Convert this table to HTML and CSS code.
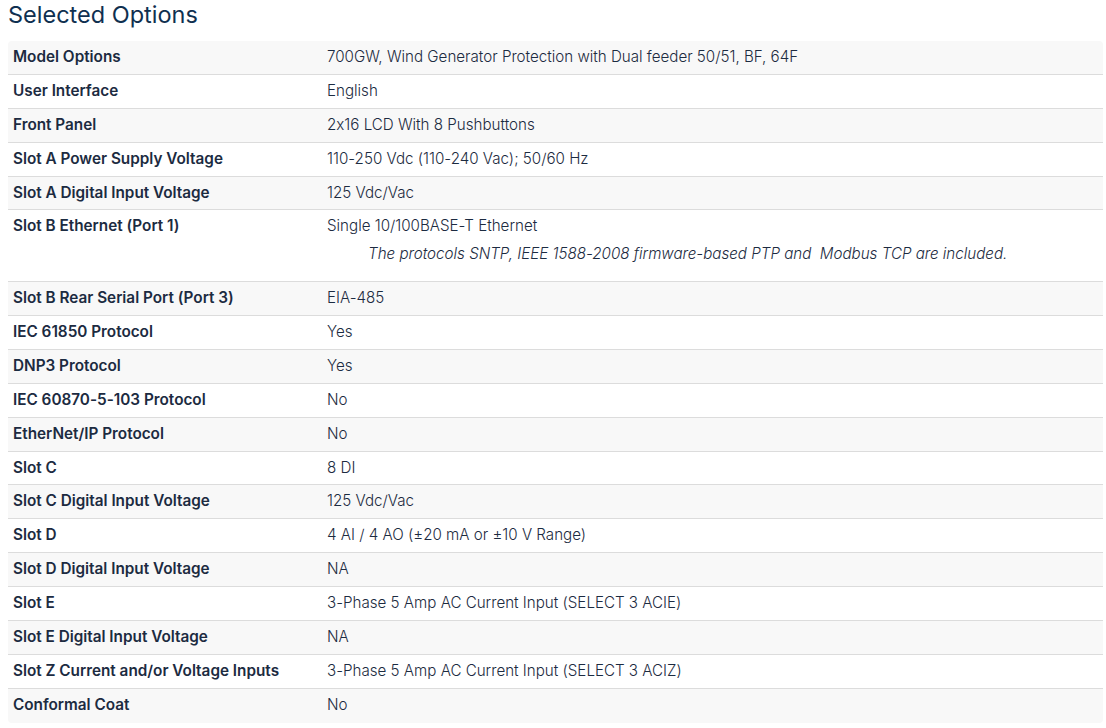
FILE: index.html
```html
<!DOCTYPE html>
<html lang="en">
<head>
<meta charset="utf-8">
<title>Selected Options</title>
<link rel="stylesheet" href="styles.css">
</head>
<body>
<h2 class="title">Selected Options</h2>
<table class="options">
<tbody>
<tr><th>Model Options</th><td>700GW, Wind Generator Protection with Dual feeder 50/51, BF, 64F</td></tr>
<tr><th>User Interface</th><td>English</td></tr>
<tr><th>Front Panel</th><td>2x16 LCD With 8 Pushbuttons</td></tr>
<tr><th>Slot A Power Supply Voltage</th><td>110-250 Vdc (110-240 Vac); 50/60 Hz</td></tr>
<tr><th>Slot A Digital Input Voltage</th><td>125 Vdc/Vac</td></tr>
<tr><th>Slot B Ethernet (Port 1)</th><td>Single 10/100BASE-T Ethernet<div class="note">The protocols SNTP, IEEE 1588-2008 firmware-based PTP and&nbsp; Modbus TCP are included.</div></td></tr>
<tr><th>Slot B Rear Serial Port (Port 3)</th><td>EIA-485</td></tr>
<tr><th>IEC 61850 Protocol</th><td>Yes</td></tr>
<tr><th>DNP3 Protocol</th><td>Yes</td></tr>
<tr><th>IEC 60870-5-103 Protocol</th><td>No</td></tr>
<tr><th>EtherNet/IP Protocol</th><td>No</td></tr>
<tr><th>Slot C</th><td>8 DI</td></tr>
<tr><th>Slot C Digital Input Voltage</th><td>125 Vdc/Vac</td></tr>
<tr><th>Slot D</th><td>4 AI / 4 AO (±20 mA or ±10 V Range)</td></tr>
<tr><th>Slot D Digital Input Voltage</th><td>NA</td></tr>
<tr><th>Slot E</th><td>3-Phase 5 Amp AC Current Input (SELECT 3 ACIE)</td></tr>
<tr><th>Slot E Digital Input Voltage</th><td>NA</td></tr>
<tr><th>Slot Z Current and/or Voltage Inputs</th><td>3-Phase 5 Amp AC Current Input (SELECT 3 ACIZ)</td></tr>
<tr><th>Conformal Coat</th><td>No</td></tr>
</tbody>
</table>
</body>
</html>
```
FILE: styles.css
```css
html, body {
  background: #ffffff;
}
body {
  margin: 0 3px 0 8px;
  font-family: Inter, "Noto Sans", sans-serif;
  font-feature-settings: "calt" 0;
  color: #1c2b41;
}
.title {
  margin: 0;
  font-size: 23.5px;
  line-height: 30px;
  font-weight: 400;
  color: #0f3050;
}
.options {
  margin-top: 11px;
  width: 100%;
  border-collapse: separate;
  border-spacing: 0;
  border-radius: 4px;
  overflow: hidden;
}
.options th,
.options td {
  text-align: left;
  vertical-align: top;
  padding: 6px 5px 6px 5px;
  line-height: 20.88px;
  border-bottom: 1px solid #dcdcdc;
}
.options tr:last-child th,
.options tr:last-child td {
  border-bottom: none;
  padding-bottom: 7px;
}
.options th {
  width: 304px;
  font-size: 15.3px;
  font-weight: 600;
}
.options td {
  font-size: 15.15px;
  font-weight: 300;
}
.options tr:nth-child(odd) {
  background: #f8f8f8;
}
.note {
  font-style: italic;
  margin: 7px 0 10px 41px;
}
```
